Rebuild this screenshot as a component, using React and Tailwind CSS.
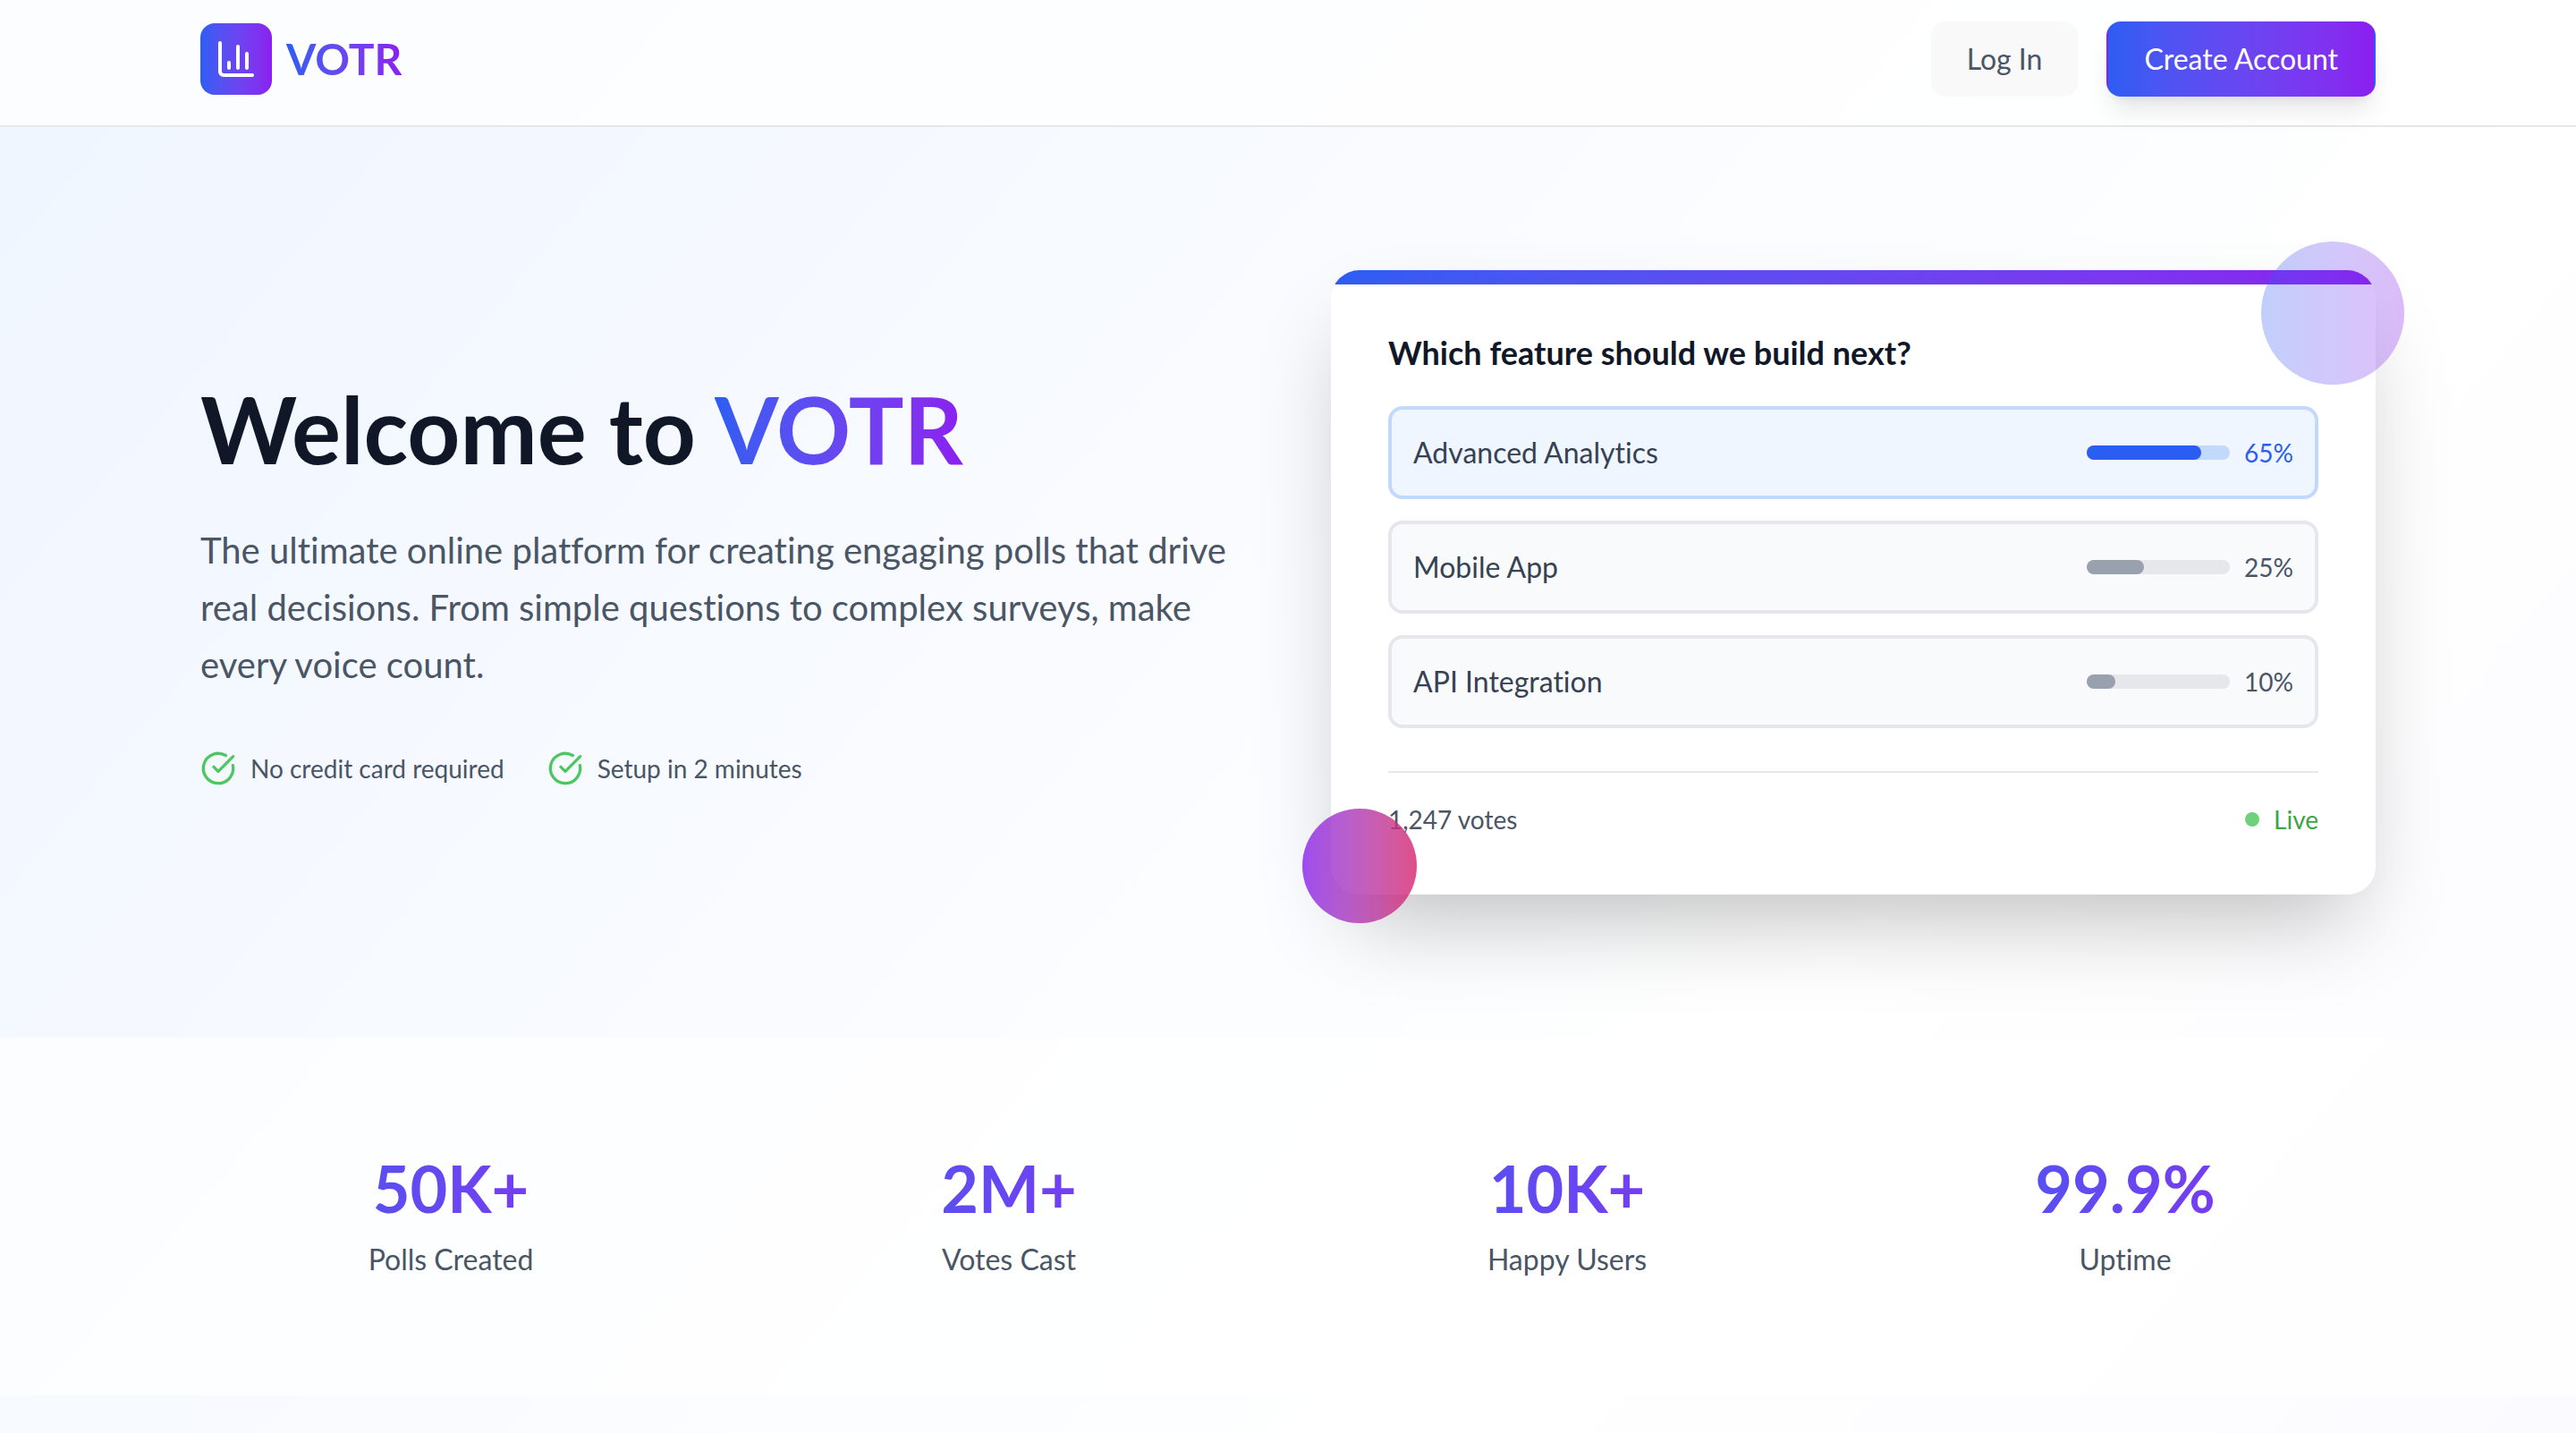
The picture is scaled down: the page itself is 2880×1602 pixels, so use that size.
const brand = 'bg-gradient-to-r from-[#2c5df3] to-[#8b1eef]';

const options = [
  { name: 'Advanced Analytics', share: '65%', fill: 'w-4/5', leading: true },
  { name: 'Mobile App', share: '25%', fill: 'w-2/5', leading: false },
  { name: 'API Integration', share: '10%', fill: 'w-1/5', leading: false },
];

const stats = [
  { value: '50K+', label: 'Polls Created' },
  { value: '2M+', label: 'Votes Cast' },
  { value: '10K+', label: 'Happy Users' },
  { value: '99.9%', label: 'Uptime' },
];

function ChartIcon() {
  return (
    <svg viewBox="0 0 24 24" className="size-12" fill="none" stroke="currentColor" strokeWidth="2" strokeLinecap="round" strokeLinejoin="round" aria-hidden="true">
      <path d="M3 3v16a2 2 0 0 0 2 2h16" />
      <path d="M18 17V9" />
      <path d="M13 17V5" />
      <path d="M8 17v-3" />
    </svg>
  );
}

function CheckIcon() {
  return (
    <svg viewBox="0 0 24 24" className="size-10 text-[#4fc760]" fill="none" stroke="currentColor" strokeWidth="2" strokeLinecap="round" strokeLinejoin="round" aria-hidden="true">
      <path d="M21.801 10A10 10 0 1 1 17 3.335" />
      <path d="m9 11 3 3L22 4" />
    </svg>
  );
}

function Header() {
  return (
    <header className="border-b-2 border-[#e5e7eb] bg-white/80">
      <div className="mx-auto flex max-w-[2560px] items-center justify-between px-16 pt-6 pb-8">
        <a href="#" className="flex items-center gap-4">
          <span className={`flex size-20 items-center justify-center rounded-2xl text-white ${brand}`}>
            <ChartIcon />
          </span>
          <span className={`bg-clip-text text-[48px] leading-[64px] font-bold text-transparent ${brand}`}>VOTR</span>
        </a>
        <nav className="flex items-center gap-8">
          <button type="button" className="rounded-2xl bg-[#f9f9f9] px-10 py-[18px] text-[32px] leading-[48px] text-[#4a5565]">
            Log In
          </button>
          <button type="button" className={`rounded-2xl border-2 border-transparent px-10 py-4 text-[32px] leading-[48px] text-white shadow-[0_20px_30px_-6px_rgb(0_0_0/0.1),0_8px_12px_-8px_rgb(0_0_0/0.1)] ${brand}`}>
            Create Account
          </button>
        </nav>
      </div>
    </header>
  );
}

function PollCard() {
  return (
    <div className="relative">
      <div className="relative overflow-hidden rounded-[32px] bg-white p-16">
        <div className={`absolute inset-x-0 top-0 h-4 ${brand}`} />
        <h2 className="mb-8 text-[36px] leading-[56px] font-bold text-[#101828]">Which feature should we build next?</h2>
        <ul className="flex flex-col gap-6">
          {options.map((o) => (
            <li
              key={o.name}
              className={`flex items-center justify-between rounded-2xl border-4 p-6 ${o.leading ? 'border-[#c3d9fc] bg-[#eff6ff]' : 'border-[#e5e7eb] bg-[#f9fafb]'}`}
            >
              <span className="text-[32px] leading-[48px] text-[#364153]">{o.name}</span>
              <span className="flex items-center gap-4">
                <span className={`h-4 w-40 rounded-full ${o.leading ? 'bg-[#c3d9fc]' : 'bg-[#e5e7eb]'}`}>
                  <span className={`block h-4 rounded-full ${o.fill} ${o.leading ? 'bg-[#2c5df3]' : 'bg-[#99a1af]'}`} />
                </span>
                <span className={`text-[28px] leading-[40px] ${o.leading ? 'text-[#2c5df3]' : 'text-[#4a5565]'}`}>{o.share}</span>
              </span>
            </li>
          ))}
        </ul>
        <div className="mt-12 flex items-center justify-between border-t-2 border-[#e5e7eb] pt-8 text-[28px] leading-[40px]">
          <span className="text-[#4a5565]">1,247 votes</span>
          <span className="flex items-center gap-4 text-[#3fa34b]">
            <span className="size-4 rounded-full bg-[#6fd17c]" />
            Live
          </span>
        </div>
      </div>
      <div className="absolute inset-0 -z-10 rounded-[32px] shadow-[0_50px_100px_-24px_rgb(0_0_0/0.25)]" />
      <div className={`absolute -top-8 -right-8 size-40 rounded-full opacity-30 ${brand}`} />
      <div className="absolute -bottom-8 -left-8 size-32 rounded-full bg-gradient-to-r from-[#8b1eef] to-[#d81f6b] opacity-80" />
    </div>
  );
}

export default function App() {
  return (
    <div className="isolate min-h-screen bg-[linear-gradient(130deg,#eff5ff_0%,#ffffff_70%,#fbfafe_100%)] font-['Lato',sans-serif] [font-variant-ligatures:none]">
      <Header />
      <main>
        <section className="mx-auto grid max-w-[2560px] grid-cols-2 items-center gap-24 px-16 py-40">
          <div>
            <h1 className="mb-12 text-[103px] leading-[112px] font-bold text-[#101828]">
              Welcome to <span className={`bg-clip-text text-transparent ${brand}`}>VOTR</span>
            </h1>
            <p className="mb-16 text-[40px] leading-[64px] text-[#4a5565]">
              The ultimate online platform for creating engaging polls that drive real decisions. From simple questions to complex surveys, make every voice count.
            </p>
            <ul className="flex items-center gap-12 text-[28px] leading-[40px] text-[#4a5565]">
              <li className="flex items-center gap-4"><CheckIcon />No credit card required</li>
              <li className="flex items-center gap-4"><CheckIcon />Setup in 2 minutes</li>
            </ul>
          </div>
          <PollCard />
        </section>
        <section className="bg-white/70">
          <dl className="mx-auto grid max-w-[2560px] grid-cols-4 gap-16 px-16 py-32 text-center">
            {stats.map((s) => (
              <div key={s.label} className="flex flex-col-reverse gap-4">
                <dt className="text-[32px] leading-[48px] text-[#4a5565]">{s.label}</dt>
                <dd className={`bg-clip-text text-[72px] leading-[80px] font-bold text-transparent ${brand}`}>{s.value}</dd>
              </div>
            ))}
          </dl>
        </section>
      </main>
    </div>
  );
}
